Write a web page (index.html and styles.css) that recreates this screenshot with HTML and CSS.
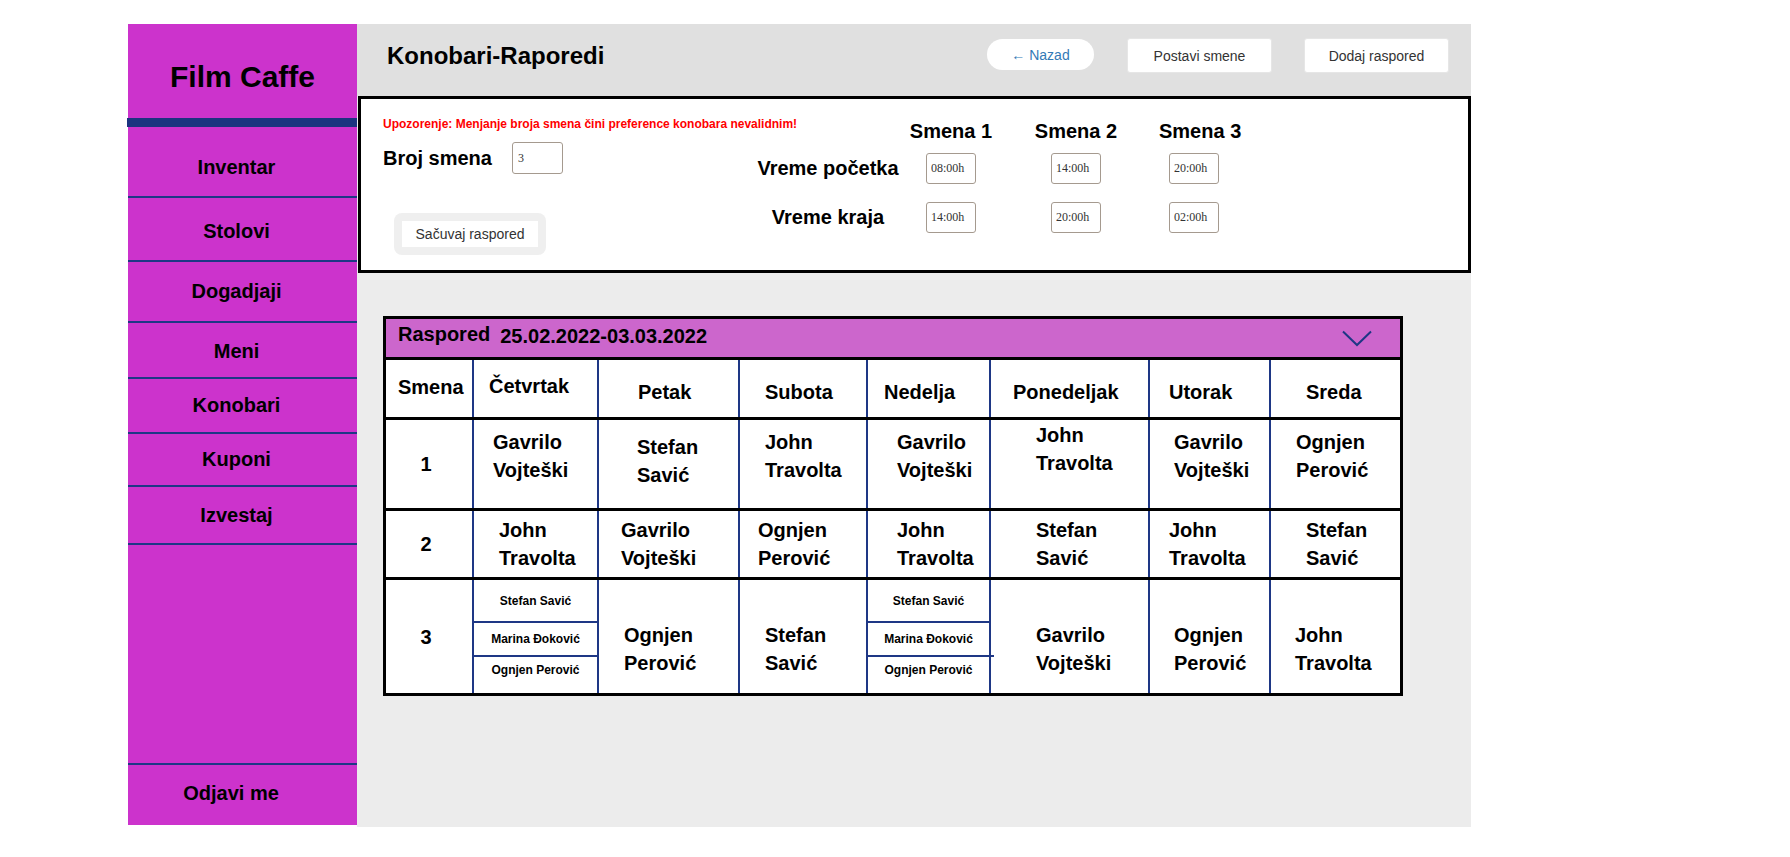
FILE: index.html
```html
<!DOCTYPE html>
<html lang="sr">
<head>
<meta charset="utf-8">
<title>Konobari-Raporedi</title>
<link rel="stylesheet" href="styles.css">
</head>
<body>
<div class="app">
  <aside class="sidebar">
    <div class="brand">Film Caffe</div>
    <div class="brand-bar"></div>
    <nav class="nav">
      <a class="nav-item nav-inventar">Inventar</a>
      <a class="nav-item nav-stolovi">Stolovi</a>
      <a class="nav-item nav-dogadjaji">Dogadjaji</a>
      <a class="nav-item nav-meni">Meni</a>
      <a class="nav-item nav-konobari">Konobari</a>
      <a class="nav-item nav-kuponi">Kuponi</a>
      <a class="nav-item nav-izvestaj">Izvestaj</a>
    </nav>
    <a class="logout">Odjavi me</a>
  </aside>

  <main class="main">
    <header class="topbar">
      <h1 class="page-title">Konobari-Raporedi</h1>
      <div class="actions">
        <button class="btn btn-back">← Nazad</button>
        <button class="btn btn-plain">Postavi smene</button>
        <button class="btn btn-plain">Dodaj raspored</button>
      </div>
    </header>

    <section class="settings">
      <div class="settings-left">
        <p class="warning">Upozorenje: Menjanje broja smena čini preference konobara nevalidnim!</p>
        <div class="count-row">
          <label class="count-label">Broj smena</label>
          <input class="count-input" value="3" readonly>
        </div>
        <div class="save-wrap"><button class="save-btn">Sačuvaj raspored</button></div>
      </div>

      <div class="shift-grid">
        <div></div>
        <div class="shift-head">Smena 1</div>
        <div class="shift-head">Smena 2</div>
        <div class="shift-head shift-head-3">Smena 3</div>

        <div class="shift-label">Vreme početka</div>
        <input class="time-input" value="08:00h" readonly>
        <input class="time-input" value="14:00h" readonly>
        <input class="time-input" value="20:00h" readonly>

        <div class="shift-label">Vreme kraja</div>
        <input class="time-input" value="14:00h" readonly>
        <input class="time-input" value="20:00h" readonly>
        <input class="time-input" value="02:00h" readonly>
      </div>
    </section>

    <section class="schedule">
      <div class="schedule-bar">
        <span class="schedule-title">Raspored</span>
        <span class="schedule-range">25.02.2022-03.03.2022</span>
        <svg class="chevron" viewBox="0 0 30 17" width="30" height="17"><polyline points="1,1.5 15,15 29,1.5" fill="none" stroke="#1e3785" stroke-width="2"/></svg>
      </div>

      <div class="trow thead">
        <div class="cell">Smena</div>
        <div class="cell">Četvrtak</div>
        <div class="cell">Petak</div>
        <div class="cell">Subota</div>
        <div class="cell">Nedelja</div>
        <div class="cell">Ponedeljak</div>
        <div class="cell">Utorak</div>
        <div class="cell">Sreda</div>
      </div>

      <div class="trow row-1">
        <div class="cell num">1</div>
        <div class="cell"><span>Gavrilo</span><span>Vojteški</span></div>
        <div class="cell"><span>Stefan</span><span>Savić</span></div>
        <div class="cell"><span>John</span><span>Travolta</span></div>
        <div class="cell"><span>Gavrilo</span><span>Vojteški</span></div>
        <div class="cell"><span>John</span><span>Travolta</span></div>
        <div class="cell"><span>Gavrilo</span><span>Vojteški</span></div>
        <div class="cell"><span>Ognjen</span><span>Perović</span></div>
      </div>

      <div class="trow row-2">
        <div class="cell num">2</div>
        <div class="cell"><span>John</span><span>Travolta</span></div>
        <div class="cell"><span>Gavrilo</span><span>Vojteški</span></div>
        <div class="cell"><span>Ognjen</span><span>Perović</span></div>
        <div class="cell"><span>John</span><span>Travolta</span></div>
        <div class="cell"><span>Stefan</span><span>Savić</span></div>
        <div class="cell"><span>John</span><span>Travolta</span></div>
        <div class="cell"><span>Stefan</span><span>Savić</span></div>
      </div>

      <div class="trow row-3">
        <div class="cell num">3</div>
        <div class="cell cell-split">
          <div class="sub sub-1">Stefan Savić</div>
          <div class="sub sub-2">Marina Đoković</div>
          <div class="sub sub-3">Ognjen Perović</div>
        </div>
        <div class="cell"><span>Ognjen</span><span>Perović</span></div>
        <div class="cell"><span>Stefan</span><span>Savić</span></div>
        <div class="cell cell-split">
          <div class="sub sub-1">Stefan Savić</div>
          <div class="sub sub-2 sub-wide">Marina Đoković</div>
          <div class="sub sub-3">Ognjen Perović</div>
        </div>
        <div class="cell"><span>Gavrilo</span><span>Vojteški</span></div>
        <div class="cell"><span>Ognjen</span><span>Perović</span></div>
        <div class="cell"><span>John</span><span>Travolta</span></div>
      </div>
    </section>
  </main>
</div>
</body>
</html>
```

FILE: styles.css
```css
* { box-sizing: border-box; }

html, body {
  margin: 0;
  padding: 0;
  background: #ffffff;
}

body {
  font-family: "Liberation Sans", Arial, sans-serif;
  color: #000;
}

.app {
  display: flex;
  align-items: flex-start;
  padding: 24px 0 0 128px;
}

/* ---------- Sidebar ---------- */
.sidebar {
  width: 229px;
  height: 801px;
  background: #cc33cc;
  display: flex;
  flex-direction: column;
}

.brand {
  height: 94px;
  padding-top: 36px;
  text-align: center;
  font-size: 30px;
  line-height: 34px;
  font-weight: bold;
}

.brand-bar {
  height: 9px;
  margin: 0 -1px;
  background: #1b3480;
}

.nav {
  display: flex;
  flex-direction: column;
}

.nav-item {
  display: flex;
  align-items: center;
  justify-content: center;
  padding-right: 12px;
  border-bottom: 2px solid #1e3785;
  font-size: 20px;
  line-height: 23px;
  font-weight: bold;
  color: #000;
  text-decoration: none;
}

.nav-inventar { height: 71px; padding-top: 11px; }
.nav-stolovi { height: 64px; padding-top: 4px; }
.nav-dogadjaji { height: 61px; }
.nav-meni { height: 56px; padding-top: 3px; }
.nav-konobari { height: 55px; }
.nav-kuponi { height: 53px; }
.nav-izvestaj { height: 58px; }

.logout {
  margin-top: auto;
  height: 62px;
  border-top: 2px solid #1e3785;
  display: flex;
  align-items: center;
  justify-content: center;
  padding: 0 23px 4px 0;
  font-size: 20px;
  line-height: 23px;
  font-weight: bold;
  color: #000;
}

/* ---------- Main ---------- */
.main {
  width: 1114px;
  height: 803px;
  background: #ececec;
  display: flex;
  flex-direction: column;
}

.topbar {
  height: 72px;
  background: #e0e0e0;
  display: flex;
  justify-content: space-between;
  align-items: flex-start;
  padding: 0 22px 0 30px;
}

.page-title {
  margin: 0;
  padding-top: 18px;
  font-size: 24px;
  line-height: 28px;
  font-weight: bold;
}

.actions {
  display: flex;
  align-items: flex-start;
}

.btn {
  font-family: "Liberation Sans", Arial, sans-serif;
  font-size: 14px;
  padding: 0;
  cursor: pointer;
}

.btn-back {
  width: 107px;
  height: 31px;
  margin: 15px 33px 0 0;
  border: none;
  border-radius: 16px;
  background: #fff;
  color: #337ab7;
}

.btn-plain {
  width: 145px;
  height: 35px;
  margin-top: 14px;
  border: 1px solid #e6e6e6;
  border-radius: 3px;
  background: #fff;
  color: #333;
}

.btn-plain + .btn-plain { margin-left: 32px; }

/* ---------- Settings box ---------- */
.settings {
  height: 177px;
  margin-left: 1px;
  background: #fff;
  border: 3px solid #000;
  display: flex;
  align-items: flex-start;
  padding-left: 22px;
}

.settings-left {
  width: 374px;
  padding-top: 19px;
}

.warning {
  margin: 0;
  font-size: 12px;
  line-height: 13px;
  font-weight: bold;
  color: #ff0000;
  white-space: nowrap;
}

.count-row {
  display: flex;
  align-items: center;
  height: 32px;
  margin-top: 11px;
}

.count-label {
  width: 129px;
  font-size: 20px;
  line-height: 23px;
  font-weight: bold;
}

.count-input,
.time-input {
  border: 1px solid #a59a8f;
  border-radius: 3px;
  background: #fff;
  color: #333;
  font-family: "Liberation Serif", "Times New Roman", serif;
  font-size: 12px;
  outline: none;
}

.count-input {
  width: 51px;
  height: 32px;
  padding: 0 0 0 5px;
}

.save-wrap {
  width: 152px;
  height: 42px;
  margin: 39px 0 0 11px;
  padding: 8px;
  background: #efefef;
  border-radius: 8px;
}

.save-btn {
  width: 136px;
  height: 26px;
  border: none;
  padding: 0;
  background: #fff;
  color: #333;
  font-family: "Liberation Sans", Arial, sans-serif;
  font-size: 14px;
}

.shift-grid {
  display: grid;
  grid-template-columns: 142px 104px 146px 90px;
  grid-template-rows: 23px 41px 49px;
  align-items: end;
  justify-items: center;
  padding-top: 21px;
}

.shift-head {
  font-size: 20px;
  line-height: 23px;
  font-weight: bold;
  white-space: nowrap;
}

.shift-head-3 {
  justify-self: start;
  margin-left: 10px;
}

.shift-label {
  font-size: 20px;
  line-height: 31px;
  font-weight: bold;
  white-space: nowrap;
}

.time-input {
  width: 50px;
  height: 31px;
  padding: 0 0 0 4px;
}

/* ---------- Schedule table ---------- */
.schedule {
  width: 1020px;
  margin: 43px 0 0 26px;
  border: 3px solid #000;
  background: #fff;
}

.schedule-bar {
  height: 38px;
  background: #cc66cc;
  display: flex;
  align-items: center;
  padding: 0 28px 4px 12px;
}

.schedule-title,
.schedule-range {
  font-size: 20px;
  line-height: 23px;
  font-weight: bold;
}

.schedule-title { margin-bottom: 3px; }
.schedule-range { margin-left: 10px; }

.chevron {
  margin-left: auto;
  margin-top: 4px;
  display: block;
}

.trow {
  display: grid;
  grid-template-columns: 86px 125px 141px 128px 123px 159px 121px 131px;
  border-top: 3px solid #000;
}

.thead { height: 60px; }
.row-1 { height: 91px; }
.row-2 { height: 69px; }
.row-3 { height: 116px; }

.cell {
  display: flex;
  flex-direction: column;
  justify-content: center;
  border-left: 2px solid #1e3785;
  font-size: 20px;
  line-height: 28px;
  font-weight: bold;
  white-space: nowrap;
}

.trow .cell:first-child { border-left: none; }

.row-1 .cell,
.row-3 .cell { justify-content: flex-start; }

.trow .cell.num {
  justify-content: center;
  align-items: center;
  padding-right: 6px;
}

/* header row */
.thead .cell:nth-child(1) { padding: 0 0 4px 12px; }
.thead .cell:nth-child(2) { padding: 0 0 5px 15px; }
.thead .cell:nth-child(3) { padding: 6px 0 0 39px; }
.thead .cell:nth-child(4) { padding: 6px 0 0 25px; }
.thead .cell:nth-child(5) { padding: 6px 0 0 16px; }
.thead .cell:nth-child(6) { padding: 6px 0 0 22px; }
.thead .cell:nth-child(7) { padding: 6px 0 0 19px; }
.thead .cell:nth-child(8) { padding: 6px 0 0 35px; }

/* shift 1 */
.row-1 .cell:nth-child(2) { padding: 8px 0 0 19px; }
.row-1 .cell:nth-child(3) { padding: 13px 0 0 38px; }
.row-1 .cell:nth-child(4) { padding: 8px 0 0 25px; }
.row-1 .cell:nth-child(5) { padding: 8px 0 0 29px; }
.row-1 .cell:nth-child(6) { padding: 1px 0 0 45px; }
.row-1 .cell:nth-child(7) { padding: 8px 0 0 24px; }
.row-1 .cell:nth-child(8) { padding: 8px 0 0 25px; }

/* shift 2 */
.row-2 .cell:nth-child(2) { padding-left: 25px; }
.row-2 .cell:nth-child(3) { padding-left: 22px; }
.row-2 .cell:nth-child(4) { padding-left: 18px; }
.row-2 .cell:nth-child(5) { padding-left: 29px; }
.row-2 .cell:nth-child(6) { padding-left: 45px; }
.row-2 .cell:nth-child(7) { padding-left: 19px; }
.row-2 .cell:nth-child(8) { padding-left: 35px; }

/* shift 3 */
.row-3 .cell:nth-child(3) { padding: 41px 0 0 25px; }
.row-3 .cell:nth-child(4) { padding: 41px 0 0 25px; }
.row-3 .cell:nth-child(6) { padding: 41px 0 0 45px; }
.row-3 .cell:nth-child(7) { padding: 41px 0 0 24px; }
.row-3 .cell:nth-child(8) { padding: 41px 0 0 24px; }

.cell-split { padding: 0; }

.sub {
  display: flex;
  align-items: center;
  justify-content: center;
  font-size: 12px;
  line-height: 14px;
  font-weight: bold;
}

.sub-1 {
  height: 43px;
  border-bottom: 2px solid #1e3785;
}

.sub-2 {
  height: 34px;
  border-bottom: 2px solid #1e3785;
}

.sub-3 {
  height: 36px;
  padding-bottom: 10px;
}

.sub-wide { margin-right: -5px; padding-right: 5px; }
```
